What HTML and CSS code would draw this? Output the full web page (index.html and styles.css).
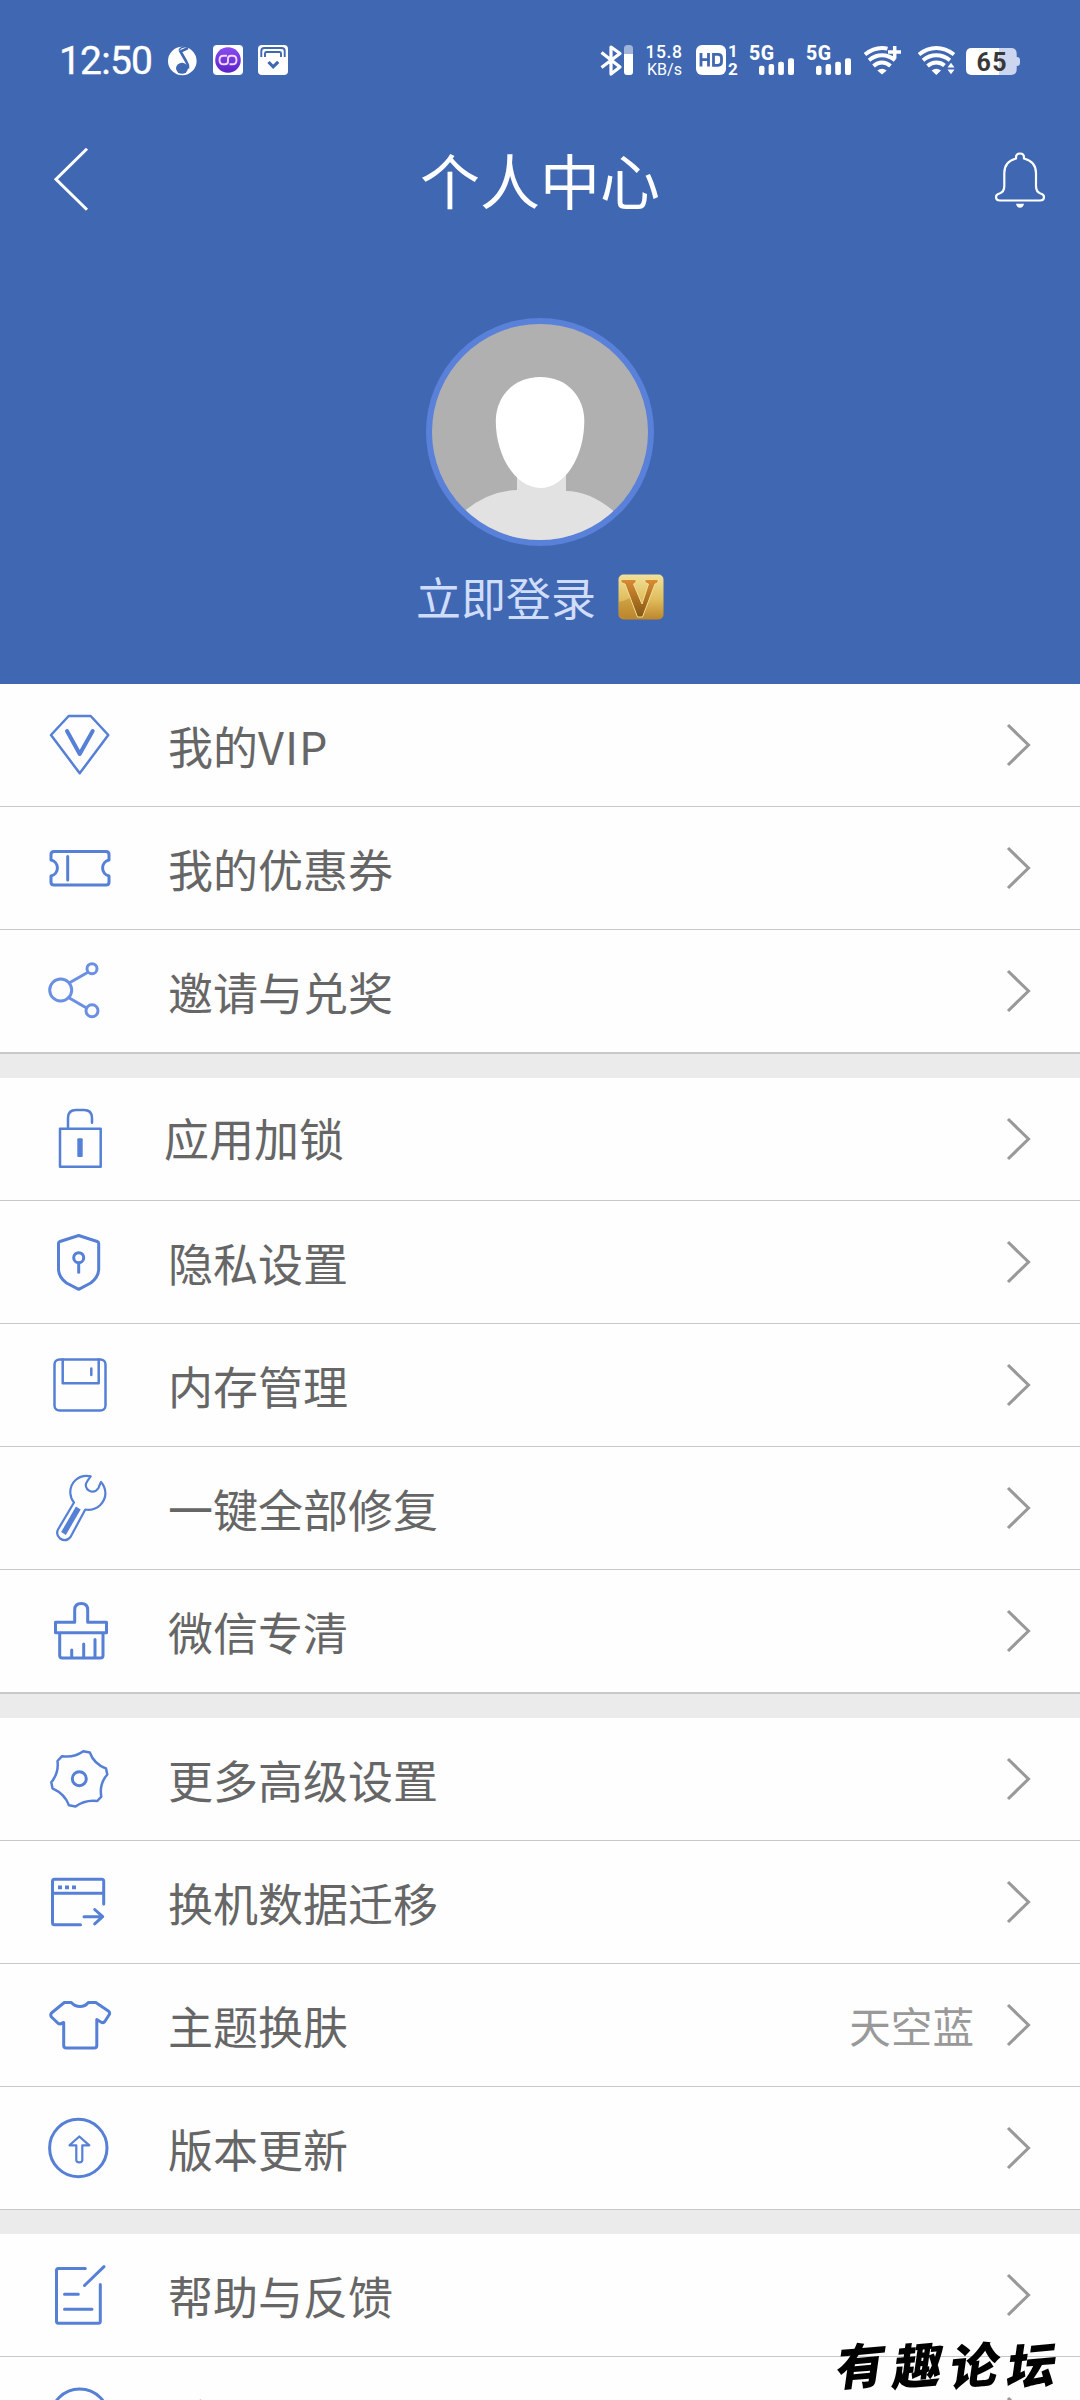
FILE: index.html
```html
<!DOCTYPE html>
<html lang="zh-CN">
<head>
<meta charset="utf-8">
<title>个人中心</title>
<link rel="stylesheet" href="styles.css">
</head>
<body>
<div class="screen">
  <header class="header">
    <div class="status">
      <div class="status-left">
        <span class="clock">12:50</span>
        <svg class="s-app" width="30" height="32" viewBox="168 45 30 32"><circle cx="182.300" cy="61" r="14.300" fill="#fff"/><ellipse cx="182" cy="68.300" rx="6" ry="5.500" fill="#4067b2"/><path d="M188 68.500q.5-3.500-1.500-6.500L180.500 51.500l7.500-3.500" fill="none" stroke="#4067b2" stroke-width="2.600"/><path d="M179 50.500q1-3 5-3.500 3-.5 4.500-2" fill="none" stroke="#4067b2" stroke-width="1.300"/></svg>
        <svg class="s-app" width="30" height="32" viewBox="213 45 30 32"><defs><linearGradient id="violet" x1="0" y1="0" x2="0" y2="1"><stop offset="0" stop-color="#8a4bf2"/><stop offset="1" stop-color="#5a22c8"/></linearGradient></defs><rect x="213" y="45" width="30" height="30" rx="4" fill="#fff"/><circle cx="228" cy="60" r="12.800" fill="url(#violet)"/><path d="M227 55.700h-3.500q-4 0-4 4.300t4 4.300h1.500q3 0 3-3v-2.600q0-3 3-3h1.500q4 0 4 4.300t-4 4.300H229.500" fill="none" stroke="#f0d8ff" stroke-width="1.900"/></svg>
        <svg class="s-app" width="30" height="32" viewBox="258 45 30 32"><rect x="258" y="45" width="30" height="30" rx="4" fill="#fff"/><path d="M261.300 57v-6q0-3 3-3h17.400q3 0 3 3v6M265 57v-3.500q0-1.500 1.500-1.500h13q1.500 0 1.500 1.500V57" fill="none" stroke="#4067b2" stroke-width="1.900"/><path d="M268.500 62l4.700 4.800 5-5" fill="none" stroke="#4067b2" stroke-width="3.200"/></svg>
      </div>
      <div class="status-right">
        <svg class="s-bt" width="33" height="32" viewBox="600 44 33 32"><path d="M601.500 52.500L620 67l-9 7V47l9 6.500L601.500 67.500" fill="none" stroke="#fff" stroke-width="3.200" stroke-linejoin="round"/><rect x="624" y="45" width="9" height="30" rx="3.500" fill="#fff" fill-opacity=".5"/><path d="M624 54h9v17.500q0 3.500-3.500 3.500h-2q-3.500 0-3.500-3.500z" fill="#fff"/></svg>
        <svg class="s-speed" width="38" height="32" viewBox="645 44 38 32"><g fill="#fff" class="latin"><text x="645.500" y="58.300" font-size="17.500" font-weight="500" textLength="36.500">15.8</text><text x="647" y="74.700" font-size="16" textLength="35">KB/s</text></g></svg>
        <svg class="s-hd" width="43" height="32" viewBox="696 44 43 32"><rect x="696" y="45" width="30" height="30" rx="6" fill="#fff"/><path d="M701 53v13.500M708.500 53v13.500M701 59.700h7.500M713.500 54.300h4.500q3.500 0 3.500 3.500v4q0 3.500-3.500 3.500h-4.500z" fill="none" stroke="#4067b2" stroke-width="2.800"/><g fill="#fff" class="latin" font-weight="700" font-size="17"><text x="728" y="57.300">1</text><text x="728" y="74.500">2</text></g></svg>
        <svg class="s-sig" width="45" height="32" viewBox="750 44 45 32"><text class="latin" x="749" y="59.500" font-size="19.500" font-weight="800" fill="#fff" textLength="25">5G</text><g fill="#fff"><rect x="759" y="65.700" width="5.500" height="9.300" rx="2"/><rect x="768.600" y="64" width="5.500" height="11" rx="2"/><rect x="778.200" y="61.700" width="5.700" height="13.300" rx="2"/><rect x="788" y="58.300" width="6" height="16.700" rx="2"/></g></svg>
        <svg class="s-sig2" width="45" height="32" viewBox="750 44 45 32"><text class="latin" x="749" y="59.500" font-size="19.500" font-weight="800" fill="#fff" textLength="25">5G</text><g fill="#fff"><rect x="759" y="65.700" width="5.500" height="9.300" rx="2"/><rect x="768.600" y="64" width="5.500" height="11" rx="2"/><rect x="778.200" y="61.700" width="5.700" height="13.300" rx="2"/><rect x="788" y="58.300" width="6" height="16.700" rx="2"/></g></svg>
        <svg class="s-wifi" width="38" height="32" viewBox="864 44 38 32"><g fill="none" stroke="#fff" stroke-width="3.900"><path d="M865 54.500q8-6.500 17-6.500 3 0 5.500.6M869 60.300q6-5 13-5t13 5M873.500 66q4-3.500 8.500-3.500t8.500 3.500"/><path d="M888 52h13M894.700 46v12.500" stroke-width="3.500"/></g><path d="M877.300 70.500q4.700-3.500 9.400 0L882 74.500z" fill="#fff"/></svg>
        <svg class="s-wifi2" width="38" height="32" viewBox="918 44 38 32"><g fill="none" stroke="#fff" stroke-width="3.900"><path d="M919 54.500q8-6.500 17.300-6.500T954 54.500M923 60.300q6-5 13.300-5T950 60.300M927.500 66q4-3.500 8.800-3.500t8.200 3"/></g><path d="M931.600 70.500q4.700-3.500 9.400 0l-4.700 4.500zM947.500 67.500h7l-3.500-4.700zM947.500 69.500h7l-3.500 4.700z" fill="#fff"/></svg>
        <svg class="s-bat" width="55" height="32" viewBox="966 44 55 32"><path d="M999 48h12q5.700 0 5.700 5.700V57q3.300 0 3.300 3v3q0 3-3.300 3v3.300q0 5.700-5.700 5.700h-12z" fill="#ccd6ee"/><path d="M999 48v27h-27.300q-5.700 0-5.700-5.700V53.700q0-5.700 5.700-5.700z" fill="#fff"/><text class="latin" x="976.500" y="71" font-size="25" font-weight="700" fill="#383838" textLength="30">65</text></svg>
      </div>
    </div>
    <nav class="nav">
      <svg class="back" width="36" height="70" viewBox="53 150 36 70"><path d="M87 154.700l-31 30.500 31 30.500" fill="none" stroke="#fff" stroke-width="3"/></svg>
      <h1 class="title">个人中心</h1>
      <svg class="bell" width="52" height="58" viewBox="994 151 52 58"><path d="M1016 158.500v-1q0-4 4-4t4 4v1q12 3 12 14.500v13q0 6 4.500 7.500 3.500 1 3.500 3.500 0 3.500-4 3.500h-40q-4 0-4-3.500 0-2.500 3.500-3.500 4.800-1.500 4.800-7.500v-13q0-11.500 11.700-14.500z" fill="none" stroke="#fff" stroke-width="2.200"/><path d="M1016 203.700h8q-.8 4-4 4t-4-4z" fill="#fff"/></svg>
    </nav>
    <svg class="avatar" width="228" height="228" viewBox="426 318 228 228"><defs><clipPath id="face"><circle cx="540" cy="432" r="108"/></clipPath></defs><circle cx="540" cy="432" r="114" fill="#5a81d9"/><g clip-path="url(#face)"><path d="M426 318h228v228H426z" fill="#b0b0b0"/><path d="M517 470h49v21q26 0 52 24v31H460v-31q26-24 57-25z" fill="#e2e2e2"/><path d="M540.300 377c27 0 44 20 44 44 0 36-20 67-44 67s-44.500-31-44.500-67c0-24 17.500-44 44.500-44z" fill="#fff"/></g></svg>
    <div class="login">
      <span>立即登录</span>
      <svg width="46" height="46" viewBox="0 0 46 46"><defs><linearGradient id="gold" x1="0" y1="0" x2="0" y2="1"><stop offset="0" stop-color="#f1e29b"/><stop offset=".55" stop-color="#e0bd5c"/><stop offset="1" stop-color="#bd862c"/></linearGradient><linearGradient id="vee" x1="0" y1="0" x2="0" y2="1"><stop offset="0" stop-color="#d98d33"/><stop offset="1" stop-color="#855712"/></linearGradient></defs><rect x=".5" y=".5" width="45" height="45" rx="5" fill="url(#gold)"/><path d="M1 28Q11 26 16 20l9 23q-12 3-24-1z" fill="#b88127" opacity=".45"/><path d="M3 5.500h15v3l-2.500 1.500 8.500 20 6.500-20-3.500-1.500v-3h13v3l-3 1.500-12.500 33h-5L7 10 3 8.500z" fill="url(#vee)" stroke="#f3dd95" stroke-width="1"/></svg>
    </div>
  </header>

  <main>
    <section class="group thick">
      <div class="row"><svg class="ico" viewBox="44 25 72 72"><path d="M68.700 32h22l17.600 19-28.600 38.300L51 51z" stroke-width="2.500"/><path d="M67 47l12.700 23 13-23" stroke-width="4"/></svg><span class="label">我的<span class="wide">VIP</span></span><svg class="chev" viewBox="0 0 26 44"><path d="M2 2l20.500 20L2 42"/></svg></div>
      <div class="row"><svg class="ico" viewBox="44 25 72 72"><path d="M54 44.500h52q3 0 3 3V53a8.200 8.200 0 0 0 0 16v6q0 3-3 3H54q-3 0-3-3v-6a8.200 8.200 0 0 0 0-16v-5.500q0-3 3-3zM67.700 49.500V73"/></svg><span class="label">我的优惠券</span><svg class="chev" viewBox="0 0 26 44"><path d="M2 2l20.500 20L2 42"/></svg></div>
      <div class="row"><svg class="ico pale" viewBox="44 25 72 72"><circle cx="60.700" cy="60" r="11"/><circle cx="92" cy="38.700" r="5"/><circle cx="92" cy="80.700" r="6"/><path d="M70 52.500l17.500-10M68.500 67.500l18 10.500"/></svg><span class="label">邀请与兑奖</span><svg class="chev" viewBox="0 0 26 44"><path d="M2 2l20.500 20L2 42"/></svg></div>
    </section>

    <section class="group thick">
      <div class="row"><svg class="ico" viewBox="44 25 72 72"><path d="M60 50.700h40.700v38H60zM68 50.700V40q0-8 8-8h8q8 0 8 8v4.700" stroke-width="2.500"/><rect x="77.300" y="60.300" width="5.400" height="18.700" rx="1" class="solid"/></svg><span class="label shifted">应用加锁</span><svg class="chev" viewBox="0 0 26 44"><path d="M2 2l20.500 20L2 42"/></svg></div>
      <div class="row"><svg class="ico" viewBox="44 25 72 72"><path d="M78.700 34.500l18.500 6q1.500.5 1.500 2V68q0 8-8 14l-12 6.300L66.500 82q-8-6-8-14V42.500q0-1.500 1.500-2z"/><circle cx="78.700" cy="56.700" r="5"/><path d="M78.700 62v9.300"/></svg><span class="label">隐私设置</span><svg class="chev" viewBox="0 0 26 44"><path d="M2 2l20.500 20L2 42"/></svg></div>
      <div class="row"><svg class="ico" viewBox="44 25 72 72"><rect x="54.500" y="35.500" width="51" height="51" rx="5" stroke-width="2.500"/><path d="M62.700 35.500v23.800h36V35.500M91.300 44.500V51" stroke-width="2.500"/></svg><span class="label">内存管理</span><svg class="chev" viewBox="0 0 26 44"><path d="M2 2l20.500 20L2 42"/></svg></div>
      <div class="row"><svg class="ico" viewBox="44 25 72 72"><path d="M90.700 29.300C78 27 70 36 70.300 46q.5 6 3.700 9.500L58 82.500q-2.500 5 2 9 6 4 10.500-1.500L85.300 62.500q9 1.500 15-4.500 7.500-8 4-17.500-1.300-3.500-3.300-5.500-1.500 3-2.500 6-3 4.500-7.500 3.500-5.500-2-5.200-7 .3-2.200 4.900-8.200z" stroke-width="2.200"/><path d="M78.300 61L63.500 86.500" stroke-width="5.500" stroke-linecap="butt"/></svg><span class="label">一键全部修复</span><svg class="chev" viewBox="0 0 26 44"><path d="M2 2l20.500 20L2 42"/></svg></div>
      <div class="row"><svg class="ico" viewBox="44 25 72 72"><path d="M74.700 52.300V40q0-6.500 6.500-6.500t6.500 6.500v12.300h18.800v10.400H55.500V52.300zM59.700 62.700V85.500q0 2.500 2.500 2.500h38.300q2.500 0 2.500-2.500V62.700M71.700 80v8M83.700 74v14M95 69.500V88"/></svg><span class="label">微信专清</span><svg class="chev" viewBox="0 0 26 44"><path d="M2 2l20.500 20L2 42"/></svg></div>
    </section>

    <section class="group">
      <div class="row"><svg class="ico" viewBox="44 25 72 72"><path d="M83.300 33.300l6.500 1.200Q94 46 106 50.500l1.300 6Q99 66 101.300 78.700L97.300 83Q85 81.500 75.500 88.500L69 87.300Q65 76 52.500 70.300l-1.200-6Q59 55 57.500 43l4.500-4.800Q74 40 83.300 33.300z" stroke-width="2.500"/><circle cx="79.300" cy="60.700" r="7"/></svg><span class="label">更多高级设置</span><svg class="chev" viewBox="0 0 26 44"><path d="M2 2l20.500 20L2 42"/></svg></div>
      <div class="row"><svg class="ico" viewBox="44 25 72 72"><path d="M103.700 63V40.300q0-2-2-2H54.500q-2 0-2 2v41.400q0 2 2 2h26M52.500 52.300h51M84 75.700h18.500M94.700 68.500l8 7.200-8 7.200"/><path class="solid" d="M58 44.500h4v3.700h-4zM65 44.500h4v3.700h-4zM72 44.500h4v3.700h-4z"/></svg><span class="label">换机数据迁移</span><svg class="chev" viewBox="0 0 26 44"><path d="M2 2l20.500 20L2 42"/></svg></div>
      <div class="row"><svg class="ico" viewBox="44 25 72 72"><path d="M64.300 38.500h7q3.500 4 8.700 4t8.300-4h7.500l12.500 8.500q2 1.500 1 3.500l-4.500 7q-1.500 2-4 .5l-4-2.500v26q0 2.500-2.500 2.500H66.200q-2.500 0-2.500-2.500v-23l-3.500 1.500q-2 0-4-2.500L51.500 53q-1.500-2 0-4z"/></svg><span class="label">主题换肤</span><span class="value">天空蓝</span><svg class="chev" viewBox="0 0 26 44"><path d="M2 2l20.500 20L2 42"/></svg></div>
      <div class="row"><svg class="ico" viewBox="44 25 72 72"><circle cx="78.300" cy="61" r="28.700"/><path d="M79.300 49.500L69.500 58.300h6.800v15q0 2 3 2t3-2v-15h7z" stroke-width="2.200"/></svg><span class="label">版本更新</span><svg class="chev" viewBox="0 0 26 44"><path d="M2 2l20.500 20L2 42"/></svg></div>
    </section>

    <section class="group">
      <div class="row"><svg class="ico" viewBox="44 25 72 72"><path d="M85.300 34.500H58.500q-2 0-2 2v50.800q0 2 2 2h39.800q2 0 2-2V50.500M104 32.700L84.500 51.500M64.500 60.300h13.800M64.500 75.300h27.500"/></svg><span class="label">帮助与反馈</span><svg class="chev" viewBox="0 0 26 44"><path d="M2 2l20.500 20L2 42"/></svg></div>
      <div class="row"><svg class="ico" viewBox="44 25 72 72"><circle cx="79.700" cy="61" r="29"/></svg><span class="label">关于</span><svg class="chev" viewBox="0 0 26 44"><path d="M2 2l20.500 20L2 42"/></svg></div>
    </section>
  </main>
  <div class="watermark"><span>有</span><span>趣</span><span>论</span><span>坛</span></div>
</div>
</body>
</html>
```
FILE: styles.css
```css
* { box-sizing: border-box; }
html, body { margin: 0; padding: 0; }
body {
  width: 1080px;
  height: 2400px;
  overflow: hidden;
  background: #ebebeb;
  font-family: "Noto Sans CJK SC", "Noto Sans", sans-serif;
}
svg { display: block; flex: none; overflow: visible; }
.latin { font-family: Roboto, sans-serif; }

.screen { position: relative; width: 1080px; height: 2400px; overflow: hidden; }

.header {
  height: 684px;
  background: #4067b2;
  color: #fff;
  display: flex;
  flex-direction: column;
  align-items: center;
}
.status {
  width: 1080px;
  height: 125px;
  padding: 44px 59px 0 59px;
  display: flex;
  justify-content: space-between;
  align-items: flex-start;
}
.status-left, .status-right { display: flex; }
.status-left { padding-top: 1px; }
.clock {
  width: 109px;
  font: 400 39px/32px Roboto, sans-serif;
  letter-spacing: -.8px;
  -webkit-text-stroke: .4px #fff;
}
.s-app { margin-right: 15px; }
.s-bt { margin-right: 12px; }
.s-speed { margin-right: 13px; }
.s-hd { margin-right: 11px; }
.s-sig { margin-right: 12px; }
.s-sig2 { margin-right: 12px; }
.s-wifi { margin-right: 16px; }
.s-wifi2 { margin-right: 10px; }

.nav {
  width: 1080px;
  height: 120px;
  padding: 0 34px 0 53px;
  display: grid;
  grid-template-columns: 367px 240px 1fr;
  align-items: center;
}
.title { margin: -12px 0 0; font-size: 60px; line-height: 106px; font-weight: 400; white-space: nowrap; }
.back { margin-top: -12px; }
.bell { justify-self: end; margin-top: -10px; }

.avatar { margin-top: 73px; }
.login {
  width: 248px;
  height: 60px;
  margin-top: 21px;
  display: flex;
  align-items: center;
  justify-content: space-between;
  font-size: 45px;
  line-height: 60px;
  color: #cfdcfa;
}

.group { background: #fefefe; margin-bottom: 24px; }
.row {
  height: 123px;
  padding-left: 44px;
  padding-right: 48px;
  display: flex;
  align-items: center;
  border-bottom: 1px solid #c8c8c8;
}
.thick .row:last-child { height: 124px; border-bottom-width: 2px; }
.ico {
  width: 72px;
  height: 72px;
  margin-right: 52px;
  fill: none;
  stroke: #5580d6;
  stroke-width: 3;
  stroke-linecap: round;
  stroke-linejoin: round;
}
.ico.pale { stroke: #6b90e3; }
.solid { fill: #5580d6; stroke: none; }
.label { flex: 1; padding-top: 2px; font-size: 45px; line-height: 120px; color: #666; white-space: nowrap; }
.label.shifted { margin: -4px 0 0 -4px; }
.wide { letter-spacing: 1px; }
.value { margin-right: 32px; font-size: 41.600px; line-height: 122px; color: #999; }
.chev { width: 26px; height: 44px; fill: none; stroke: #999; stroke-width: 3.1; }

.watermark {
  position: absolute;
  left: 837px;
  top: 2329px;
  display: flex;
  gap: 8px;
  color: #000;
  font-size: 49px;
  line-height: 68px;
  font-weight: 900;
}
.watermark span { transform: skew(-8deg, -5deg); }
```
